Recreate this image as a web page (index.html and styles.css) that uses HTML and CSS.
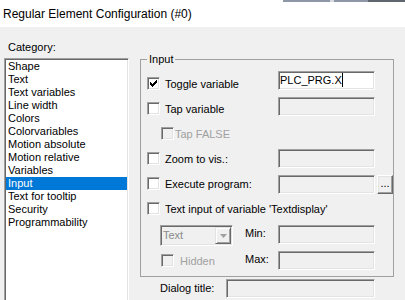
FILE: index.html
```html
<!DOCTYPE html>
<html>
	<head>
		<meta charset="utf-8">
		<title>Regular Element Configuration</title>
		<link rel="stylesheet" href="styles.css">
	</head>
	<body>
		<div class="strip"></div>
		<div class="caption">Regular Element Configuration (#0)</div>

		<div class="dialog">
			<!--左侧分类-->
			<div class="side">
				<div class="cat">Category:</div>
				<ul class="list">
					<li>Shape</li>
					<li>Text</li>
					<li>Text variables</li>
					<li>Line width</li>
					<li>Colors</li>
					<li>Colorvariables</li>
					<li>Motion absolute</li>
					<li>Motion relative</li>
					<li>Variables</li>
					<li class="sel">Input</li>
					<li>Text for tooltip</li>
					<li>Security</li>
					<li>Programmability</li>
				</ul>
			</div>

			<!--右侧 Input-->
			<div class="main">
				<fieldset class="group">
					<legend>Input</legend>
					<div class="upper">
						<div class="checks">
							<div class="chk">
								<span class="box"><svg width="7" height="7" viewBox="0 0 7 7"><path d="M0 2h1v3H0z M1 3h1v3H1z M2 4h1v3H2z M3 3h1v3H3z M4 2h1v3H4z M5 1h1v3H5z M6 0h1v3H6z" fill="#000"/></svg></span>
								Toggle variable
							</div>
							<div class="chk"><span class="box"></span>Tap variable</div>
							<div class="chk sub off"><span class="box"></span>Tap FALSE</div>
							<div class="chk"><span class="box"></span>Zoom to vis.:</div>
							<div class="chk"><span class="box"></span>Execute program:</div>
							<div class="chk"><span class="box"></span>Text input of variable 'Textdisplay'</div>
						</div>
						<div class="fields">
							<div class="edit on">PLC_PRG.X<span class="caret"></span></div>
							<div class="edit"></div>
							<div class="gap"></div>
							<div class="edit"></div>
							<div class="browse">
								<div class="edit"></div>
								<div class="btn">...</div>
							</div>
						</div>
					</div>
					<div class="lower">
						<div class="combo">
							<span class="ctext">Text</span>
							<span class="drop"><svg width="7" height="4" viewBox="0 0 7 4"><polygon points="0,0 7,0 3.5,4" fill="#a0a0a0"/></svg></span>
						</div>
						<div class="lbl">Min:</div>
						<div class="edit"></div>
						<div class="chk hid off"><span class="box"></span>Hidden</div>
						<div class="lbl">Max:</div>
						<div class="edit"></div>
					</div>
				</fieldset>
				<div class="dtitle">
					<span class="dlbl">Dialog title:</span>
					<div class="edit wide"></div>
				</div>
			</div>
		</div>
	</body>
</html>
```

FILE: styles.css
```css
  html,body{
	  margin: 0;
	  width: 405px;
	  height: 300px;
	  overflow: hidden;
  }
  body{
	  background: #f0f0f0;
	  font-family: "Liberation Sans", Arial, sans-serif;
	  font-size: 11px;
	  color: #000;
  }
  .strip{
	  height: 2px;
	  background: linear-gradient(to right, #fff 283px, #8d97a6 283px, #8d97a6 330px, #d8dce2 330px, #d8dce2 334px, #8d97a6 334px, #8d97a6 368px, #5f6670 368px);
  }
  .caption{
	  height: 25px;
	  line-height: 25px;
	  padding-left: 3px;
	  background: #fff;
	  font-size: 12px;
  }

  .dialog{
	  display: flex;
	  gap: 11px;
	  padding-left: 4px;
  }
  .side{
	  padding-top: 14px;
  }
  .cat{
	  line-height: 13px;
	  padding-left: 4px;
	  margin-bottom: 4px;
  }
  /* 列表底边在窗口外, 不画下边框 */
  .list{
	  list-style: none;
	  margin: 0;
	  width: 125px;
	  height: 242px;
	  box-sizing: border-box;
	  background: #fff;
	  border: 1px solid;
	  border-bottom: 0;
	  border-color: #a0a0a0 #fff #fff #a0a0a0;
	  box-shadow: inset 1px 1px 0 #696969, inset -1px 0 0 #e3e3e3;
	  padding: 1px 1px 0 1px;
	  overflow: hidden;
  }
  .list li{
	  line-height: 13px;
	  padding-left: 2px;
	  white-space: nowrap;
  }
  .list li.sel{
	  background: #0078d7;
	  color: #fff;
  }

  .main{
	  padding-top: 26px;
  }
  .group{
	  margin: 0;
	  padding: 0 0 6px 0;
	  width: 254px;
	  box-sizing: border-box;
	  border: 1px solid #a0a0a0;
	  min-width: 0;
  }
  .group legend{
	  margin-left: 6px;
	  padding: 0 2px;
	  line-height: 13px;
  }
  .upper{
	  display: flex;
	  margin-top: 5px;
  }
  .checks{
	  width: 137px;
	  flex-shrink: 0;
  }
  .chk{
	  height: 25px;
	  display: flex;
	  align-items: center;
	  padding-left: 6px;
	  white-space: nowrap;
  }
  .chk.sub{
	  padding-left: 20px;
  }
  .chk.off{
	  color: #a0a0a0;
  }
  .box{
	  width: 13px;
	  height: 13px;
	  box-sizing: border-box;
	  flex-shrink: 0;
	  margin-right: 5px;
	  background: #fff;
	  border: 1px solid;
	  border-color: #a0a0a0 #fff #fff #a0a0a0;
	  box-shadow: inset 1px 1px 0 #696969, inset -1px -1px 0 #e3e3e3;
	  display: flex;
	  align-items: center;
	  justify-content: center;
  }
  .sub .box{
	  margin-right: 1px;
  }
  .off .box{
	  background: #f0f0f0;
  }

  .fields{
	  width: 115px;
  }
  .edit{
	  width: 97px;
	  height: 19px;
	  box-sizing: border-box;
	  background: #f0f0f0;
	  border: 1px solid;
	  border-color: #a0a0a0 #fff #fff #a0a0a0;
	  box-shadow: inset 1px 1px 0 #696969, inset -1px -1px 0 #e3e3e3;
	  line-height: 16px;
	  padding-left: 1px;
	  white-space: nowrap;
  }
  .fields .edit{
	  margin-bottom: 7px;
  }
  .edit.on{
	  background: #fff;
  }
  .caret{
	  display: inline-block;
	  width: 1px;
	  height: 14px;
	  background: #000;
	  vertical-align: -3px;
  }
  .gap{
	  height: 26px;
  }
  .browse{
	  display: flex;
	  gap: 2px;
  }
  .btn{
	  width: 16px;
	  height: 19px;
	  box-sizing: border-box;
	  border: 1px solid;
	  border-color: #fff #696969 #696969 #fff;
	  box-shadow: inset -1px -1px 0 #a0a0a0, inset 1px 1px 0 #e3e3e3;
	  text-align: center;
	  line-height: 15px;
  }

  .lower{
	  display: grid;
	  grid-template-columns: 85px 33px 97px;
	  grid-template-rows: 26px 19px;
	  margin-top: 4px;
	  padding-left: 19px;
  }
  .lbl{
	  line-height: 17px;
	  height: 19px;
  }
  .combo{
	  width: 73px;
	  height: 21px;
	  box-sizing: border-box;
	  display: flex;
	  border: 1px solid;
	  border-color: #a0a0a0 #fff #fff #a0a0a0;
	  box-shadow: inset 1px 1px 0 #696969, inset -1px -1px 0 #e3e3e3;
	  padding: 1px;
  }
  .ctext{
	  flex: 1;
	  color: #8a8a8a;
	  line-height: 17px;
	  padding-left: 1px;
  }
  .drop{
	  width: 16px;
	  height: 17px;
	  box-sizing: border-box;
	  border: 1px solid;
	  border-color: #e3e3e3 #696969 #696969 #e3e3e3;
	  box-shadow: inset 1px 1px 0 #fff, inset -1px -1px 0 #a0a0a0;
	  display: flex;
	  align-items: center;
	  justify-content: center;
  }
  .chk.hid{
	  height: 19px;
	  padding-left: 1px;
  }
  .hid .box{
	  margin-right: 6px;
  }

  .dtitle{
	  display: flex;
	  margin-top: 2px;
	  padding-left: 20px;
  }
  .dlbl{
	  width: 66px;
	  line-height: 19px;
  }
  .edit.wide{
	  width: 149px;
  }
```
